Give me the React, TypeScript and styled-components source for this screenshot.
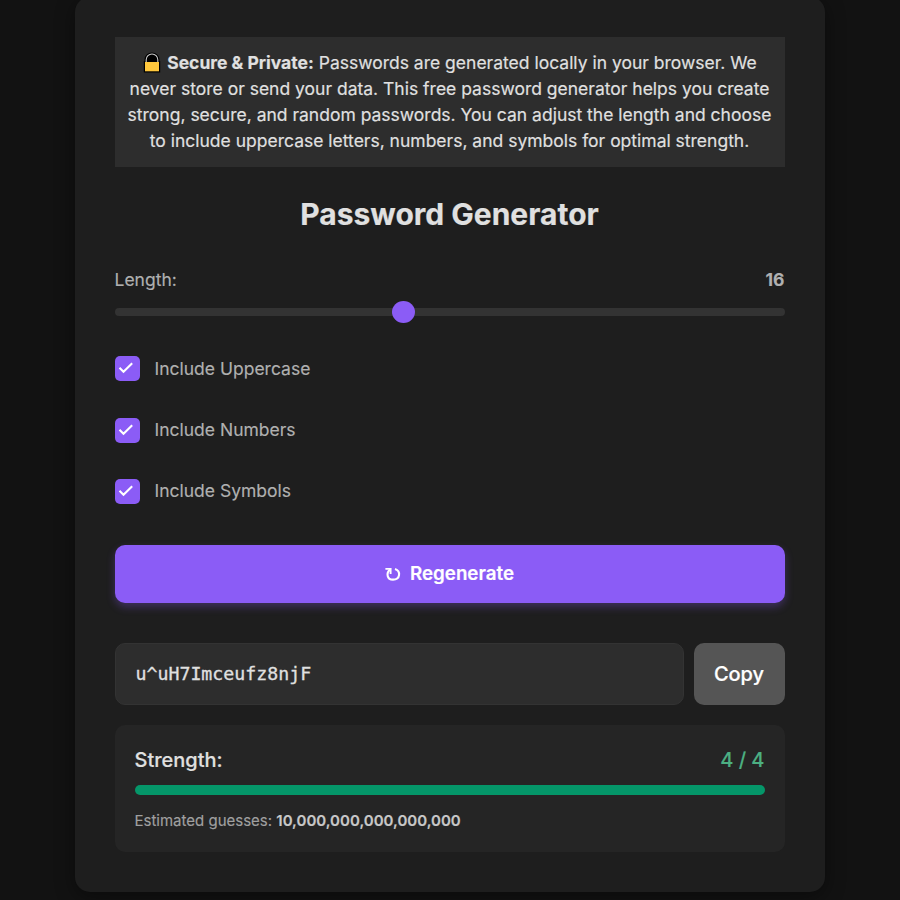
import React from 'react';
import styled, { createGlobalStyle } from 'styled-components';

const GlobalStyle = createGlobalStyle`
  *, *::before, *::after { box-sizing: border-box; }
  html { background: #121212; }
  body {
    margin: 0;
    height: 900px;
    overflow: hidden;
    background: #121212;
    color: #e0e0e0;
    font-family: Inter, sans-serif;
    -webkit-text-stroke: 0.15px currentColor;
  }
`;

const Page = styled.div`
  display: flex;
  justify-content: center;
  align-items: flex-start;
  height: 900px;
  overflow: hidden;
`;

const Card = styled.main`
  width: 750px;
  height: 895px;
  margin-top: -3px;
  padding: 40px;
  border-radius: 15px;
  background: #1e1e1e;
  box-shadow: 0 5px 20px rgba(0, 0, 0, 0.4);
`;

const Notice = styled.p`
  margin: 0;
  height: 130px;
  padding: 12.5px 13px 12.5px 12px;
  background: #2d2d2d;
  font-size: 17.5px;
  line-height: 26px;
  text-align: center;
`;

const LockIcon = styled.svg`
  width: 18px;
  height: 22px;
  margin: 0 6px 0 1px;
  vertical-align: -5px;
`;

const Title = styled.h1`
  margin: 28px 1px 0 0;
  font-size: 30px;
  line-height: 38px;
  font-weight: 700;
  text-align: center;
`;

const LengthRow = styled.div`
  display: flex;
  justify-content: space-between;
  margin: 34px 0.5px 0 -0.5px;
  color: #b0b0b0;
  font-size: 17.5px;
  line-height: 26px;
`;

const Track = styled.div`
  display: flex;
  align-items: center;
  height: 8px;
  margin-top: 15px;
  padding-left: 277px;
  border-radius: 4px;
  background: #333;
`;

const Thumb = styled.div`
  flex: none;
  width: 23px;
  height: 22px;
  border-radius: 50%;
  background: #8b5cf6;
`;

const Options = styled.div`
  display: grid;
  grid-template-rows: 62px 61px 25px;
  margin-top: 40px;
`;

const Option = styled.label`
  display: flex;
  align-items: center;
  gap: 14.5px;
  height: 25px;
  color: #b0b0b0;
  font-size: 17.5px;
  line-height: 24px;
`;

const OptionText = styled.span<{ $lift: number }>`
  padding-bottom: ${({ $lift }) => $lift}px;
`;

const CheckBox = styled.svg`
  width: 25px;
  height: 25px;
  border-radius: 5px;
  background: #8b5cf6;
`;

const Regenerate = styled.button`
  display: flex;
  align-items: center;
  justify-content: center;
  width: 100%;
  height: 58px;
  margin-top: 41px;
  padding: 0 1px 1px 0;
  gap: 8px;
  border: 0;
  border-radius: 10px;
  background: #8b5cf6;
  color: #fff;
  font: 600 18.75px Inter, sans-serif;
  -webkit-text-stroke: 0.2px currentColor;
  box-shadow: 0 4px 8px rgba(139, 92, 246, 0.3);
`;

const RedoIcon = styled.svg`
  width: 17px;
  height: 16px;
`;

const OutputRow = styled.div`
  display: grid;
  grid-template-columns: 1fr 91px;
  gap: 10px;
  height: 62px;
  margin-top: 40px;
`;

const Password = styled.output`
  display: flex;
  align-items: center;
  padding: 0 19px 2px 19.5px;
  border: 1px solid #333;
  border-radius: 10px;
  background: #2d2d2d;
  font-family: "DejaVu Sans Mono", monospace;
  font-size: 18.24px;
  -webkit-text-stroke: 0.3px currentColor;
`;

const CopyButton = styled.button`
  padding: 0 1px 0 0;
  border: 0;
  border-radius: 10px;
  background: #555;
  color: #fff;
  font: 500 20px Inter, sans-serif;
  -webkit-text-stroke: 0.2px currentColor;
`;

const StrengthPanel = styled.section`
  height: 127px;
  margin-top: 20px;
  padding: 20px;
  border-radius: 10px;
  background: #252525;
`;

const StrengthHeader = styled.div`
  display: flex;
  justify-content: space-between;
  margin: 0 0.5px 0 -0.5px;
  font-size: 20px;
  line-height: 30px;
  font-weight: 500;
`;

const Score = styled.span`
  color: #4caf82;
`;

const StrengthBar = styled.div`
  height: 10px;
  margin-top: 10px;
  border-radius: 5px;
  background: #059669;
`;

const Guesses = styled.p`
  margin: 15px 0 0 -0.5px;
  color: #a0a0a0;
  font-size: 15px;
  line-height: 22px;

  strong { color: #c8c8c8; font-weight: 600; }
`;

const options = [
  { label: 'Include Uppercase', lift: 0 },
  { label: 'Include Numbers', lift: 2 },
  { label: 'Include Symbols', lift: 2 },
];

export default function App() {
  return (
    <Page>
      <GlobalStyle />
      <Card>
        <Notice>
          <LockIcon viewBox="0 0 18 22" aria-hidden="true">
            <path d="M1.5 9V7.5a7.5 7 0 0 1 15 0V9h.7v11.5H.8V9z" fill="#000" />
            <path d="M3.2 10V7.8a5.8 5.8 0 0 1 11.6 0V10" fill="none" stroke="#c8c8c8" strokeWidth="1.1" />
            <rect x="2" y="10" width="14" height="9.3" fill="#ffc83d" />
          </LockIcon>
          <strong>Secure &amp; Private:</strong> Passwords are generated locally in your browser. We
          never store or send your data. This free password generator helps you create strong,
          secure, and random passwords. You can adjust the length and choose to include uppercase
          letters, numbers, and symbols for optimal strength.
        </Notice>
        <Title>Password Generator</Title>
        <LengthRow>
          <span>Length:</span>
          <strong>16</strong>
        </LengthRow>
        <Track>
          <Thumb />
        </Track>
        <Options>
          {options.map(({ label, lift }) => (
            <Option key={label}>
              <CheckBox viewBox="0 0 25 25" aria-hidden="true">
                <path d="M4.5 11.8 8.5 15.8 17.2 7.3" fill="none" stroke="#fff" strokeWidth="2.1" />
              </CheckBox>
              <OptionText $lift={lift}>{label}</OptionText>
            </Option>
          ))}
        </Options>
        <Regenerate>
          <RedoIcon viewBox="0 0 17 16" aria-hidden="true">
            <path d="M.4 2.9H5.6v5" fill="none" stroke="#fff" strokeWidth="1.9" />
            <path d="M5.2 3.7C.8 7 2 13.6 8 13.6C15.4 13.6 16 5 10 3" fill="none" stroke="#fff" strokeWidth="2.1" />
          </RedoIcon>
          Regenerate
        </Regenerate>
        <OutputRow>
          <Password>u^uH7Imceufz8njF</Password>
          <CopyButton>Copy</CopyButton>
        </OutputRow>
        <StrengthPanel>
          <StrengthHeader>
            <span>Strength:</span>
            <Score>4 / 4</Score>
          </StrengthHeader>
          <StrengthBar />
          <Guesses>
            Estimated guesses: <strong>10,000,000,000,000,000</strong>
          </Guesses>
        </StrengthPanel>
      </Card>
    </Page>
  );
}
